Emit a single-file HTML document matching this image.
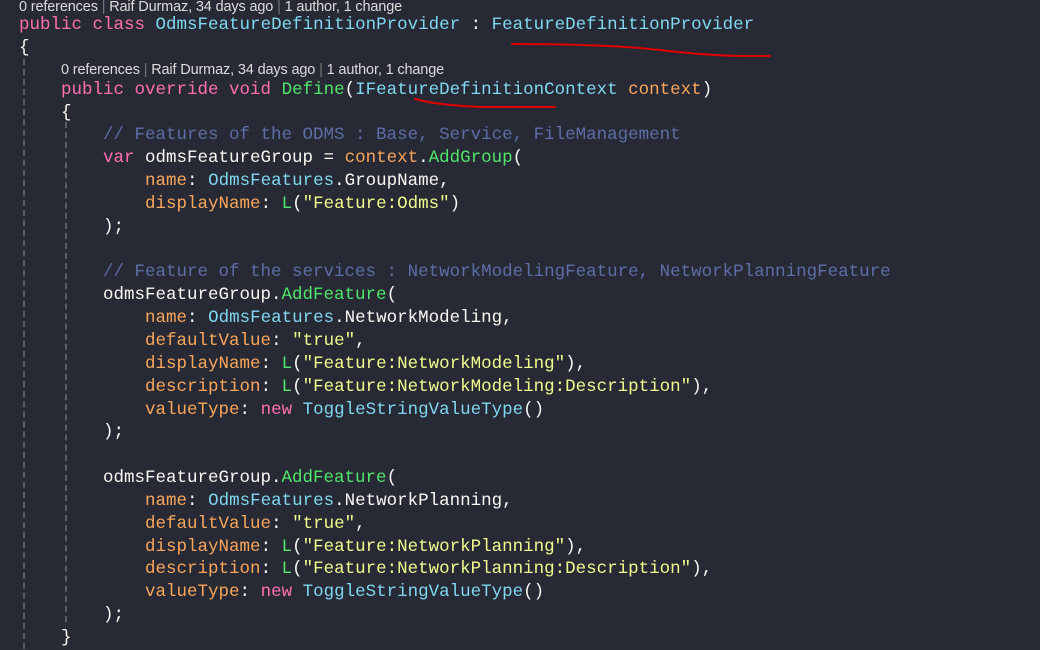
<!DOCTYPE html>
<html><head><meta charset="utf-8"><style>
html,body{margin:0;padding:0;background:#272934;width:1040px;height:642px;overflow:hidden;}
#c{position:absolute;left:19px;top:-5px;font-family:"Liberation Mono",monospace;font-size:17.5px;color:#f8f8f2;}
.l{height:22.85px;line-height:22.85px;white-space:pre;}
.cl{height:19px;line-height:19px;font-family:"Liberation Sans",sans-serif;font-size:14.5px;letter-spacing:-0.15px;color:#dcdcdc;white-space:nowrap;position:relative;}
.cl span.w{position:relative;top:3px;}
.cl i{font-style:normal;color:#777;}
.k{color:#ff6fb0}.t{color:#7fd7f0}.m{color:#50e66a}.p{color:#f9a65a}.s{color:#f1fa8c}.c{color:#5d6ea6}
.g{position:absolute;width:0;border-left:2px dashed #5a5c66;}
</style></head><body>
<div class="g" style="left:23px;top:59px;height:590px;"></div>
<div class="g" style="left:65px;top:122px;height:500px;"></div>
<div id="c"><div class="cl"><span class="w">0 references <i>|</i> Raif Durmaz, 34 days ago <i>|</i> 1 author, 1 change</span></div><div class="l"><span class="k">public class</span> <span class="t">OdmsFeatureDefinitionProvider</span> : <span class="t">FeatureDefinitionProvider</span></div><div class="l">{</div><div class="cl" style="padding-left:42px"><span class="w" style="top:1px">0 references <i>|</i> Raif Durmaz, 34 days ago <i>|</i> 1 author, 1 change</span></div><div class="l">    <span class="k">public override void</span> <span class="m">Define</span>(<span class="t">IFeatureDefinitionContext</span> <span class="p">context</span>)</div><div class="l">    {</div><div class="l">        <span class="c">// Features of the ODMS : Base, Service, FileManagement</span></div><div class="l">        <span class="k">var</span> odmsFeatureGroup = <span class="p">context</span>.<span class="m">AddGroup</span>(</div><div class="l">            <span class="p">name</span>: <span class="t">OdmsFeatures</span>.GroupName,</div><div class="l">            <span class="p">displayName</span>: <span class="m">L</span>(<span class="s">"Feature:Odms"</span>)</div><div class="l">        );</div><div class="l"> </div><div class="l">        <span class="c">// Feature of the services : NetworkModelingFeature, NetworkPlanningFeature</span></div><div class="l">        odmsFeatureGroup.<span class="m">AddFeature</span>(</div><div class="l">            <span class="p">name</span>: <span class="t">OdmsFeatures</span>.NetworkModeling,</div><div class="l">            <span class="p">defaultValue</span>: <span class="s">"true"</span>,</div><div class="l">            <span class="p">displayName</span>: <span class="m">L</span>(<span class="s">"Feature:NetworkModeling"</span>),</div><div class="l">            <span class="p">description</span>: <span class="m">L</span>(<span class="s">"Feature:NetworkModeling:Description"</span>),</div><div class="l">            <span class="p">valueType</span>: <span class="k">new</span> <span class="t">ToggleStringValueType</span>()</div><div class="l">        );</div><div class="l"> </div><div class="l">        odmsFeatureGroup.<span class="m">AddFeature</span>(</div><div class="l">            <span class="p">name</span>: <span class="t">OdmsFeatures</span>.NetworkPlanning,</div><div class="l">            <span class="p">defaultValue</span>: <span class="s">"true"</span>,</div><div class="l">            <span class="p">displayName</span>: <span class="m">L</span>(<span class="s">"Feature:NetworkPlanning"</span>),</div><div class="l">            <span class="p">description</span>: <span class="m">L</span>(<span class="s">"Feature:NetworkPlanning:Description"</span>),</div><div class="l">            <span class="p">valueType</span>: <span class="k">new</span> <span class="t">ToggleStringValueType</span>()</div><div class="l">        );</div><div class="l">    }</div></div>
<svg width="1040" height="642" style="position:absolute;left:0;top:0">
<path d="M512 44 C560 44 610 45 650 49 C680 52 700 55 740 56 L770 56" stroke="#e00000" stroke-width="2" fill="none" stroke-linecap="round"/>
<path d="M415 99 C430 103 445 105 480 107 L555 107" stroke="#e00000" stroke-width="2" fill="none" stroke-linecap="round"/>
</svg>
</body></html>
